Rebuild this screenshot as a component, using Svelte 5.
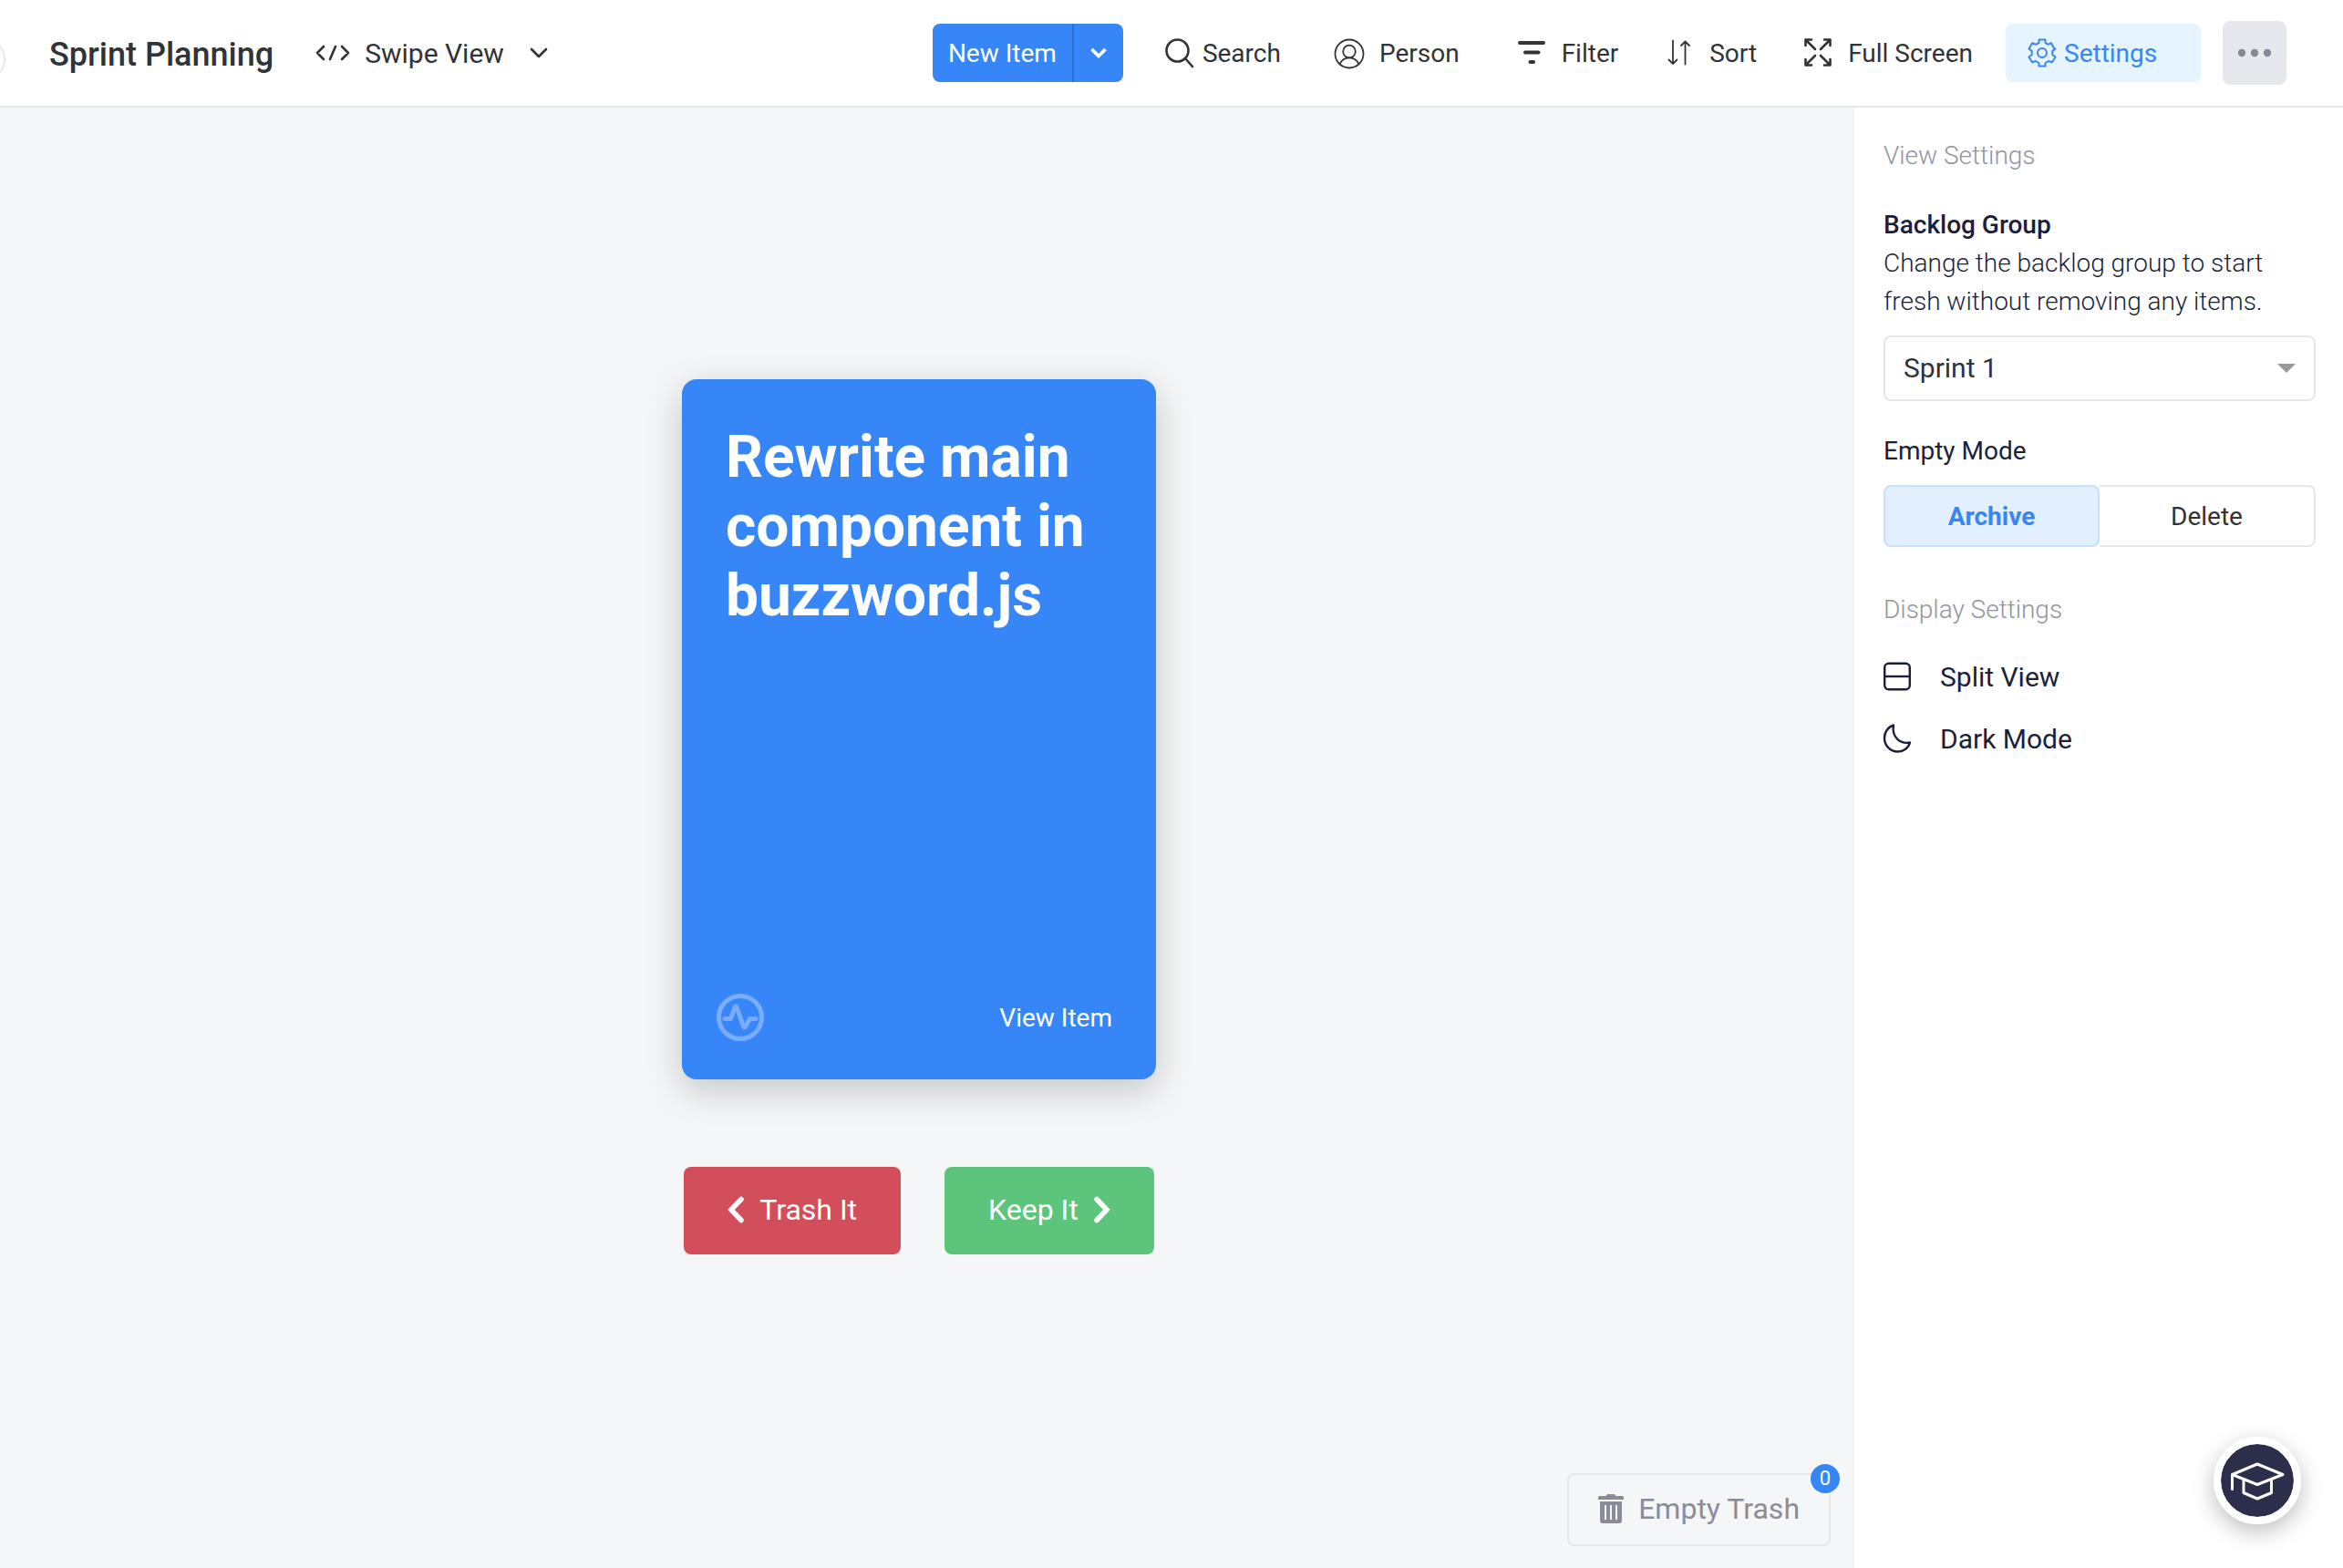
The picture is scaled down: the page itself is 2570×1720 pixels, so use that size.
<script>
  let mode = $state('archive');
  let group = $state('Sprint 1');
</script>

<div class="app">
  <header>
    <button class="collapse" aria-label="Toggle boards"></button>
    <h1>Sprint Planning</h1>
    <button class="view">
      <svg width="38" height="18" viewBox="0 0 38 18" class="line">
        <path d="M9 2 L2 9 L9 16 M29 2 L36 9 L29 16 M22 2 L16 16" />
      </svg>
      <span>Swipe View</span>
      <svg width="20" height="12" viewBox="0 0 20 12" class="line chev"><path d="M2 2 L10 10 L18 2" /></svg>
    </button>

    <div class="tools">
      <div class="new">
        <button class="new-main">New Item</button>
        <button class="new-more" aria-label="More item types">
          <svg width="20" height="14" viewBox="0 0 20 14"><path d="M2.500 3 L10 10.500 L17.500 3" fill="none" stroke="#fff" stroke-width="3.600" /></svg>
        </button>
      </div>
      <button class="tool">
        <svg width="31" height="32" viewBox="0 0 31 32" class="line">
          <circle cx="13.500" cy="13.500" r="12" /><path d="M22 22 L30 31" />
        </svg>
        Search
      </button>
      <button class="tool">
        <svg width="46" height="34" viewBox="0 0 46 34" class="line thin">
          <circle cx="23" cy="18" r="15.500" /><circle cx="23" cy="15.500" r="6.800" />
          <path d="M12.500 29.500 C14.500 24.500 18 22.300 23 22.300 C28 22.300 31.500 24.500 33.500 29.500" />
        </svg>
        Person
      </button>
      <button class="tool">
        <svg width="50" height="32" viewBox="0 0 50 32" class="line bar">
          <path d="M14 5 H40 M20 15.500 H34.500 M25.500 26 H29" />
        </svg>
        Filter
      </button>
      <button class="tool">
        <svg width="38" height="32" viewBox="0 0 38 32" class="line thin">
          <path d="M8 2.500 V28 M3.500 23.500 L8 28 L12.500 23.500 M21.500 28.500 V3.500 M17 8 L21.500 3.500 L26 8" />
        </svg>
        Sort
      </button>
      <button class="tool">
        <svg width="38" height="32" viewBox="0 0 38 32" class="line">
          <path d="M1.500 8 V1.500 H8 M1.500 1.500 L12 12 M22 1.500 H28.500 V8 M28.500 1.500 L18 12 M1.500 23 V29.500 H8 M1.500 29.500 L12 19 M22 29.500 H28.500 V23 M28.500 29.500 L18 19" />
        </svg>
        Full Screen
      </button>
      <button class="settings">
        <svg width="32" height="32" viewBox="0 0 32 32" fill="none" stroke="currentColor" stroke-width="2" stroke-linejoin="round">
          <path d="M12.500 1.500 H19.500 V5 L22.800 6.800 L25.800 5 L29 11 L30.500 11.500 L27.300 14 V18 L30.500 20.500 L27 26.200 L23 25 L19.500 27 V30.500 H12.500 V27 L9 25 L5 26.200 L1.500 20.500 L4.700 18 V14 L1.500 11.500 L5 5.200 L9.200 6.800 L12.500 5 Z" />
          <circle cx="16" cy="16" r="5" />
        </svg>
        Settings
      </button>
      <button class="dots" aria-label="More options">
        <svg width="38" height="10" viewBox="0 0 38 10" fill="currentColor"><circle cx="5" cy="5" r="4.200" /><circle cx="19" cy="5" r="4.200" /><circle cx="33" cy="5" r="4.200" /></svg>
      </button>
    </div>
  </header>

  <div class="body">
    <main>
      <article class="card">
        <h2>Rewrite main component in buzzword.js</h2>
        <footer>
          <svg width="52" height="52" viewBox="0 0 52 52" class="pulse">
            <circle cx="26" cy="26" r="23.500" />
            <path d="M9 27.500 H15.500 L20 15 Q21 13 22 15 L29.500 36 Q30.500 38 32 35.500 L36.500 27.500 H43" />
          </svg>
          <button class="open">View Item</button>
        </footer>
      </article>
      <div class="choices">
        <button class="trash">
          <svg width="18" height="30" viewBox="0 0 18 30"><path d="M15 3.500 L4 15 L15 26.500" /></svg>
          Trash It
        </button>
        <button class="keep">
          Keep It
          <svg width="18" height="30" viewBox="0 0 18 30"><path d="M3 3.500 L14 15 L3 26.500" /></svg>
        </button>
      </div>
      <button class="empty">
        <svg width="28" height="32" viewBox="0 0 28 32" fill="currentColor">
          <path d="M0 3.500 Q0 2 1.500 2 H8.500 L10 0 H18 L19.500 2 H26.500 Q28 2 28 3.500 V6 H0 Z" />
          <path fill-rule="evenodd" d="M2 8 H26 V29 Q26 32 23 32 H5 Q2 32 2 29 Z M7 12 V28 H9 V12 Z M13 12 V28 H15 V12 Z M19 12 V28 H21 V12 Z" />
        </svg>
        Empty Trash
        <span class="badge">0</span>
      </button>
    </main>

    <aside>
      <h3>View Settings</h3>
      <label for="group">Backlog Group</label>
      <p>Change the backlog group to start fresh without removing any items.</p>
      <div class="select">
        <select id="group" bind:value={group}>
          <option>Sprint 1</option>
          <option>Sprint 2</option>
        </select>
        <svg width="20" height="10" viewBox="0 0 20 10"><path d="M0 0 H20 L10 10 Z" fill="#999" /></svg>
      </div>
      <fieldset>
        <legend>Empty Mode</legend>
        <div class="toggle">
          <button class:on={mode === 'archive'} aria-pressed={mode === 'archive'} onclick={() => (mode = 'archive')}>Archive</button>
          <button class:on={mode === 'delete'} aria-pressed={mode === 'delete'} onclick={() => (mode = 'delete')}>Delete</button>
        </div>
      </fieldset>
      <h3>Display Settings</h3>
      <div class="display">
        <button>
          <svg width="30" height="32" viewBox="0 0 30 32"><rect x="1.200" y="1.700" width="27.600" height="28.600" rx="4.500" /><path d="M1 16 H29" /></svg>
          Split View
        </button>
        <button>
          <svg width="30" height="32" viewBox="0 0 30 32"><path d="M11 1.500 C4.500 3.500 1 9.500 1 15.500 C1 24 7.500 30.500 15.500 30.500 C22 30.500 27.500 26.500 29 20.500 C19 22.500 8.500 15 11 1.500 Z" /></svg>
          Dark Mode
        </button>
      </div>
      <button class="help" aria-label="Learning center">
        <svg width="60" height="42" viewBox="0 0 60 42" fill="none" stroke="#fff" stroke-width="3" stroke-linejoin="round" stroke-linecap="round">
          <path d="M2.500 14.500 L30 3 L58 14.500 L30 25.500 Z M2.500 14.500 V30.500 M15 20 V34.500 L30 41 L45.500 34.500 V20" />
        </svg>
      </button>
    </aside>
  </div>
</div>

<style>
  :global(body) { margin: 0; }
  .app, button, select { font-family: Roboto, "Liberation Sans", sans-serif; }
  .app {
    display: flex;
    flex-direction: column;
    min-height: 100vh;
    overflow: hidden;
    color: #323338;
    background: #fff;
    font-size: 28px;
  }
  .app *, .app { box-sizing: border-box; }
  h1, h2, h3, p, fieldset { margin: 0; padding: 0; border: 0; }
  button {
    display: flex;
    align-items: center;
    padding: 0;
    border: 0;
    background: none;
    color: inherit;
    font-size: 28px;
    white-space: nowrap;
    cursor: pointer;
  }
  svg { flex: none; display: block; overflow: visible; }

  header {
    position: relative;
    display: flex;
    align-items: center;
    height: 118px;
    padding: 0 62px 0 54px;
    border-bottom: 2px solid #e6e8ee;
  }
  .collapse {
    position: absolute;
    left: -42px;
    top: 41px;
    width: 48px;
    height: 48px;
    border: 2px solid #e6e8f0;
    border-radius: 50%;
  }
  h1 { font-size: 36px; font-weight: 500; line-height: 44px; white-space: nowrap; padding-top: 4px; }
  .view { gap: 16px; margin-left: 46px; font-size: 30px; }
  .chev { margin-left: 12px; }
  .line { fill: none; stroke: currentColor; stroke-width: 2.600; stroke-linecap: round; stroke-linejoin: round; }
  .thin { stroke-width: 1.800; }
  .bar { stroke-width: 4; }
  .tools { display: flex; align-items: center; margin-left: auto; }
  .new { display: flex; height: 64px; border-radius: 8px; overflow: hidden; color: #fff; background: #3686f7; margin-right: 46px; }
  .new-main { padding: 0 17px; }
  .new-more { width: 56px; justify-content: center; border-left: 2px solid #2c70d2; }
  .tool { gap: 10px; margin-right: 52px; height: 64px; }
  .tool:nth-of-type(5) { margin-right: 36px; }
  .settings { width: 214px; height: 64px; gap: 8px; padding-left: 24px; border-radius: 8px; color: #3686f7; background: #e6f4ff; }
  .dots { width: 70px; height: 70px; margin-left: 24px; justify-content: center; border-radius: 8px; color: #878896; background: #e7e8ee; }

  .body { display: flex; flex: 1; }
  main {
    position: relative;
    flex: 1;
    display: flex;
    flex-direction: column;
    align-items: center;
    justify-content: center;
    padding: 0 16px 46px 0;
    background: #f5f6f8;
  }
  .card {
    display: flex;
    flex-direction: column;
    justify-content: space-between;
    width: 520px;
    height: 768px;
    padding: 48px 48px 42px;
    border-radius: 16px;
    color: #fff;
    background: #3686f7;
    box-shadow: 0 12px 40px rgba(0, 0, 0, 0.2);
  }
  h2 { font-size: 64px; font-weight: 700; line-height: 76px; }
  .card footer { display: flex; align-items: center; justify-content: space-between; margin-left: -10px; }
  .pulse { fill: none; stroke: #7aacfa; stroke-width: 5; stroke-linecap: round; stroke-linejoin: round; }
  .choices { display: flex; gap: 48px; margin-top: 96px; color: #fff; }
  .choices button { gap: 17px; height: 96px; padding: 0 48px 2px; border-radius: 8px; font-size: 32px; }
  .choices svg { fill: none; stroke: #fff; stroke-width: 5.500; stroke-linecap: round; }
  .trash { background: #d34e5b; }
  .keep { background: #5cc57b; }
  .empty {
    position: absolute;
    right: 24px;
    bottom: 24px;
    gap: 16px;
    height: 80px;
    padding: 0 32px 2px;
    border: 2px solid #e6e8f0;
    border-radius: 8px;
    color: #8b8c99;
    font-size: 32px;
  }
  .badge {
    position: absolute;
    top: -12px;
    right: -12px;
    width: 32px;
    height: 32px;
    border-radius: 50%;
    color: #fff;
    background: #3686f7;
    font-size: 22px;
    line-height: 32px;
    text-align: center;
  }

  aside {
    flex: none;
    width: 538px;
    padding: 32px 30px 48px 32px;
    border-left: 2px solid #f0f1f3;
    color: #1c1f3b;
  }
  h3 { font-size: 28px; font-weight: 300; line-height: 42px; color: #9294a2; }
  label { display: block; margin-top: 34px; font-weight: 500; line-height: 42px; }
  p { font-weight: 300; line-height: 42px; }
  .select { display: grid; align-items: center; margin-top: 16px; }
  select {
    grid-area: 1 / 1;
    appearance: none;
    width: 100%;
    height: 72px;
    padding: 0 20px 2px;
    border: 2px solid #e6e6ee;
    border-radius: 8px;
    color: #323338;
    background: #fff;
    font-size: 30px;
  }
  .select svg { grid-area: 1 / 1; justify-self: end; margin-right: 22px; pointer-events: none; }
  fieldset { min-width: 0; margin: 34px 0 48px; }
  legend { padding: 0; font-weight: 400; line-height: 42px; }
  .toggle { display: grid; grid-template-columns: 1fr 1fr; margin-top: 16px; }
  .toggle button { justify-content: center; height: 68px; border: 2px solid #e6e6ee; color: #323338; }
  .toggle button:first-child { border-radius: 8px 0 0 8px; border-right: 0; }
  .toggle button:last-child { border-radius: 0 8px 8px 0; border-left: 0; }
  .toggle button.on { border: 2px solid #c8e1fb; border-radius: 8px; color: #3686f7; background: #e1effe; font-weight: 700; }
  .display { display: grid; gap: 24px; margin-top: 30px; }
  .display button { gap: 32px; height: 44px; font-size: 30px; }
  .display svg { fill: none; stroke: currentColor; stroke-width: 2.400; stroke-linejoin: round; }
  .help {
    position: fixed;
    right: 46px;
    bottom: 48px;
    justify-content: center;
    width: 96px;
    height: 96px;
    border: 8px solid #fff;
    border-radius: 50%;
    background: #2b2f4c;
    background-clip: padding-box;
    box-shadow: 0 8px 24px rgba(0, 0, 0, 0.25);
  }
</style>
